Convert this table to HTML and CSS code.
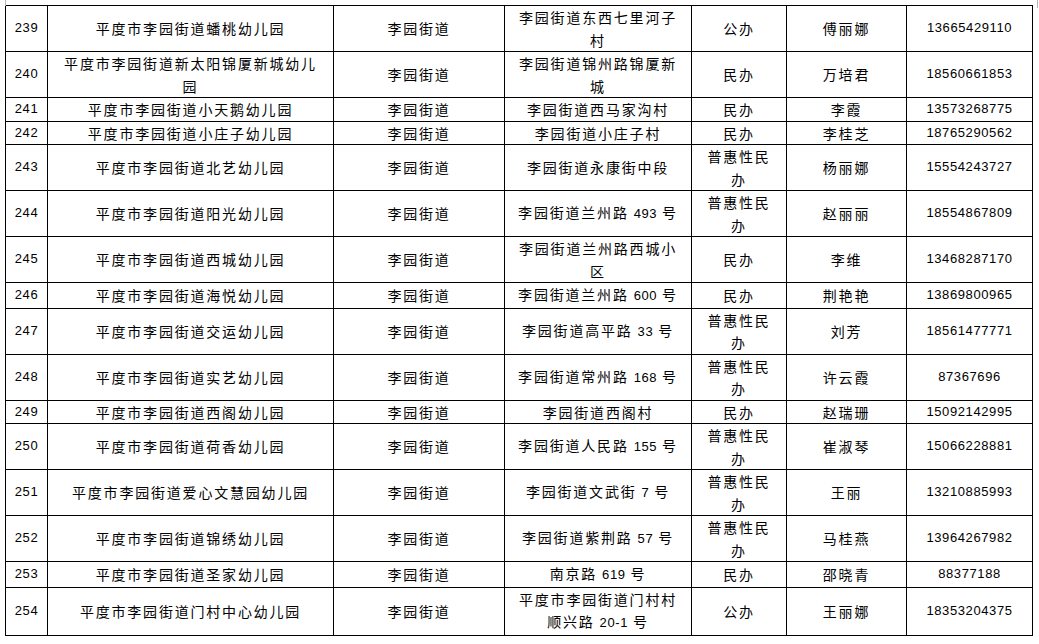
FILE: index.html
```html
<!DOCTYPE html>
<html lang="zh-CN">
<head>
<meta charset="utf-8">
<title>平度市李园街道幼儿园名单</title>
<link rel="stylesheet" href="styles.css">
</head>
<body>
<div class="sheet">
<table class="list">
<colgroup>
<col class="c-no"><col class="c-name"><col class="c-street"><col class="c-addr"><col class="c-type"><col class="c-person"><col class="c-tel">
</colgroup>
<tbody>
<tr class="t"><td class="n">239</td><td>平度市李园街道蟠桃幼儿园</td><td>李园街道</td><td>李园街道东西七里河子村</td><td>公办</td><td>傅丽娜</td><td class="n">13665429110</td></tr>
<tr class="t"><td class="n">240</td><td>平度市李园街道新太阳锦厦新城幼儿园</td><td>李园街道</td><td>李园街道锦州路锦厦新城</td><td>民办</td><td>万培君</td><td class="n">18560661853</td></tr>
<tr class="s"><td class="n">241</td><td>平度市李园街道小天鹅幼儿园</td><td>李园街道</td><td>李园街道西马家沟村</td><td>民办</td><td>李霞</td><td class="n">13573268775</td></tr>
<tr class="s"><td class="n">242</td><td>平度市李园街道小庄子幼儿园</td><td>李园街道</td><td>李园街道小庄子村</td><td>民办</td><td>李桂芝</td><td class="n">18765290562</td></tr>
<tr class="t"><td class="n">243</td><td>平度市李园街道北艺幼儿园</td><td>李园街道</td><td>李园街道永康街中段</td><td>普惠性民办</td><td>杨丽娜</td><td class="n">15554243727</td></tr>
<tr class="t"><td class="n">244</td><td>平度市李园街道阳光幼儿园</td><td>李园街道</td><td>李园街道兰州路 <span class="d">493</span> 号</td><td>普惠性民办</td><td>赵丽丽</td><td class="n">18554867809</td></tr>
<tr class="t"><td class="n">245</td><td>平度市李园街道西城幼儿园</td><td>李园街道</td><td>李园街道兰州路西城小区</td><td>民办</td><td>李维</td><td class="n">13468287170</td></tr>
<tr class="s"><td class="n">246</td><td>平度市李园街道海悦幼儿园</td><td>李园街道</td><td>李园街道兰州路 <span class="d">600</span> 号</td><td>民办</td><td>荆艳艳</td><td class="n">13869800965</td></tr>
<tr class="t"><td class="n">247</td><td>平度市李园街道交运幼儿园</td><td>李园街道</td><td>李园街道高平路 <span class="d">33</span> 号</td><td>普惠性民办</td><td>刘芳</td><td class="n">18561477771</td></tr>
<tr class="t"><td class="n">248</td><td>平度市李园街道实艺幼儿园</td><td>李园街道</td><td>李园街道常州路 <span class="d">168</span> 号</td><td>普惠性民办</td><td>许云霞</td><td class="n">87367696</td></tr>
<tr class="s"><td class="n">249</td><td>平度市李园街道西阁幼儿园</td><td>李园街道</td><td>李园街道西阁村</td><td>民办</td><td>赵瑞珊</td><td class="n">15092142995</td></tr>
<tr class="t"><td class="n">250</td><td>平度市李园街道荷香幼儿园</td><td>李园街道</td><td>李园街道人民路 <span class="d">155</span> 号</td><td>普惠性民办</td><td>崔淑琴</td><td class="n">15066228881</td></tr>
<tr class="t"><td class="n">251</td><td>平度市李园街道爱心文慧园幼儿园</td><td>李园街道</td><td>李园街道文武街 <span class="d">7</span> 号</td><td>普惠性民办</td><td>王丽</td><td class="n">13210885993</td></tr>
<tr class="t"><td class="n">252</td><td>平度市李园街道锦绣幼儿园</td><td>李园街道</td><td>李园街道紫荆路 <span class="d">57</span> 号</td><td>普惠性民办</td><td>马桂燕</td><td class="n">13964267982</td></tr>
<tr class="s"><td class="n">253</td><td>平度市李园街道圣家幼儿园</td><td>李园街道</td><td>南京路 <span class="d">619</span> 号</td><td>民办</td><td>邵晓青</td><td class="n">88377188</td></tr>
<tr class="t"><td class="n">254</td><td>平度市李园街道门村中心幼儿园</td><td>李园街道</td><td>平度市李园街道门村村顺兴路 <span class="d">20-1</span> 号</td><td>公办</td><td>王丽娜</td><td class="n">18353204375</td></tr>
</tbody>
</table>
</div>
</body>
</html>
```
FILE: styles.css
```css
html, body {
  margin: 0;
  padding: 0;
  background: #ffffff;
}

body {
  position: relative;
}

body::before,
body::after {
  content: "";
  position: absolute;
  top: 0;
  width: 1px;
  background: #b8b8b8;
}

body::before {
  left: 5px;
  height: 6px;
}

body::after {
  left: 1037px;
  height: 8px;
}

.sheet {
  padding: 5px 0 0 5px;
}

.list {
  border-collapse: collapse;
  table-layout: fixed;
  width: 1028px;
  font-family: "Noto Sans CJK SC", "Noto Sans", sans-serif;
  font-size: 14px;
  color: #000000;
}

.c-no { width: 42px; }
.c-name { width: 286px; }
.c-street { width: 171px; }
.c-addr { width: 187px; }
.c-type { width: 95px; }
.c-person { width: 120px; }
.c-tel { width: 126px; }

.list td {
  border: 1px solid #000000;
  padding: 0 10px;
  text-align: center;
  vertical-align: middle;
  line-height: 22.5px;
  letter-spacing: 1.8px;
  white-space: normal;
}

.list tr.s td {
  height: 21.8px;
}

.list tr.t td {
  height: 44.7px;
}

.list td.n {
  padding: 0 2px;
  font-family: "Liberation Sans", sans-serif;
  font-size: 13px;
  letter-spacing: 0.6px;
}

.list .d {
  font-family: "Liberation Sans", sans-serif;
  font-size: 13px;
  letter-spacing: 0.6px;
}
```
